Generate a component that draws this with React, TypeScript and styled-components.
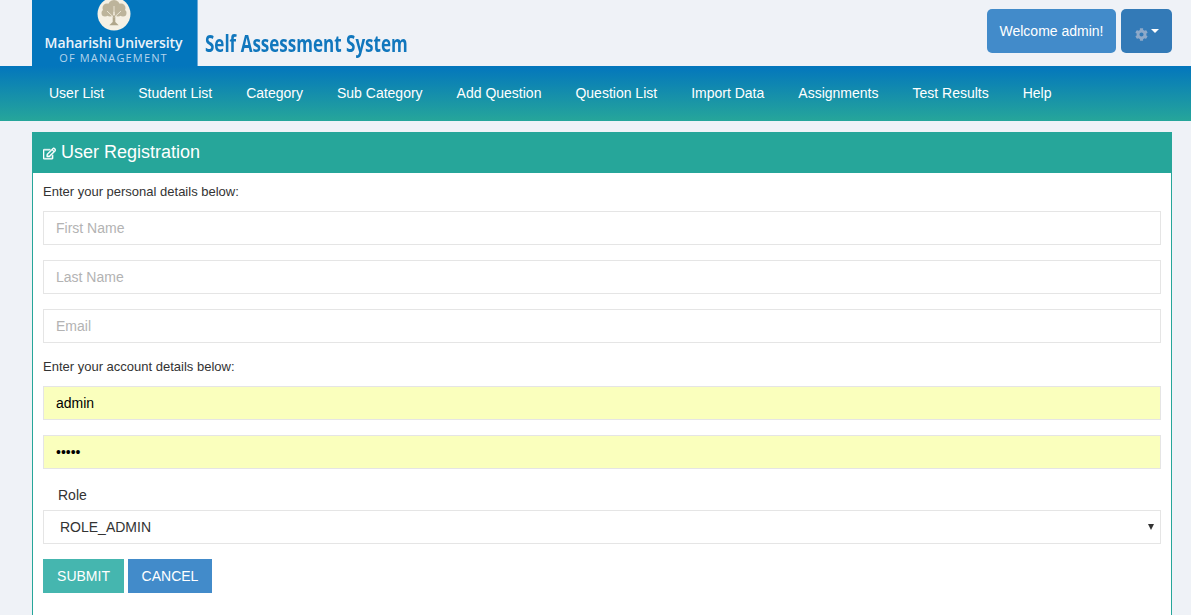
import React from 'react';
import styled, { createGlobalStyle } from 'styled-components';
import { FaCog, FaRegEdit } from 'react-icons/fa';

const NAV_ITEMS = [
  'User List',
  'Student List',
  'Category',
  'Sub Category',
  'Add Question',
  'Question List',
  'Import Data',
  'Assignments',
  'Test Results',
  'Help',
];

const GlobalStyle = createGlobalStyle`
  html, body {
    margin: 0;
    height: 100%;
    overflow: hidden;
    background: #eff2f7;
    font-family: "Liberation Sans", Arial, sans-serif;
    font-size: 14px;
    color: #333;
  }
`;

const Header = styled.header`
  height: 66px;
  padding: 0 19px 0 32px;
  display: flex;
  align-items: flex-start;
  justify-content: space-between;
`;

const Brand = styled.div`
  display: flex;
  align-items: flex-start;
`;

const LogoBlock = styled.div`
  width: 163px;
  height: 66px;
  padding-right: 2px;
  background: #0376bd;
  border-right: 1px solid #6aa9d8;
  color: #fff;
  overflow: hidden;
  display: flex;
  flex-direction: column;
  align-items: center;
  font-family: "Open Sans", sans-serif;
`;

const LogoSeal = styled.svg`
  width: 34px;
  height: 31px;
  flex: none;
  margin-bottom: 3px;
  filter: blur(0.4px);
`;

const LogoTitle = styled.div`
  font-size: 14px;
  font-weight: 600;
  line-height: 17px;
  letter-spacing: -0.1px;
  white-space: nowrap;
  color: #eaf3fa;
`;

const LogoSub = styled.div`
  font-size: 11px;
  line-height: 14px;
  letter-spacing: 1.15px;
  white-space: nowrap;
  color: #b4d4ec;
`;

const SystemName = styled.div`
  margin: 29px 0 0 7px;
  font-family: "Open Sans", sans-serif;
  font-weight: 700;
  font-size: 23px;
  line-height: 28px;
  color: #1177bd;
  white-space: nowrap;
  transform: scaleX(0.74);
  transform-origin: left center;
`;

const UserTools = styled.div`
  display: flex;
  gap: 5px;
  margin-top: 9px;
`;

const WelcomeBadge = styled.div`
  height: 44px;
  padding: 0 12.5px;
  display: flex;
  align-items: center;
  background: #428bca;
  border-radius: 5px;
  color: #fff;
  font-size: 14px;
`;

const SettingsButton = styled.button`
  width: 51px;
  height: 44px;
  padding: 0;
  border: 0;
  border-radius: 5px;
  background: #337ab7;
  display: flex;
  align-items: center;
  justify-content: center;
  gap: 3px;
  svg {
    color: #8ea9c9;
    width: 13px;
    height: 13px;
    margin-top: 7px;
  }
`;

const Caret = styled.span`
  width: 0;
  height: 0;
  margin-top: -1px;
  border-left: 4px solid transparent;
  border-right: 4px solid transparent;
  border-top: 4px solid #fff;
`;

const NavBar = styled.nav`
  height: 55px;
  padding-left: 32px;
  display: flex;
  background: linear-gradient(to bottom, #0376bd, #26a69a);
`;

const NavLink = styled.a`
  padding: 0 17px;
  line-height: 54px;
  color: #fff;
  font-size: 14px;
  white-space: nowrap;
`;

const Panel = styled.section`
  margin: 11px 19px 0 32px;
  background: #fff;
  border: 1px solid #26a69a;
  border-top: 0;
  border-bottom: 0;
`;

const PanelHeading = styled.h2`
  margin: 0 -1px;
  height: 41px;
  padding: 0 11px;
  display: flex;
  align-items: center;
  gap: 5px;
  background: #26a69a;
  color: #fff;
  font-size: 18px;
  font-weight: 400;
  svg {
    width: 13px;
    height: 13px;
    margin-top: 2px;
    stroke: currentColor;
    stroke-width: 20;
  }
`;

const PanelBody = styled.div`
  padding: 10px 10px 40px;
`;

const Hint = styled.p`
  margin: 0 0 11px;
  font-size: 13px;
  line-height: 17px;
  color: #333;
`;

const Field = styled.input<{ $filled?: boolean }>`
  display: block;
  box-sizing: border-box;
  width: 100%;
  height: 34px;
  margin-bottom: 15px;
  padding: 0 12px;
  border: 1px solid #e5e5e5;
  background: ${(p) => (p.$filled ? '#faffbd' : '#fff')};
  color: #000;
  font-family: inherit;
  font-size: 14px;
  outline: none;
  &::placeholder {
    color: #b3b3b3;
    opacity: 1;
  }
`;

const RoleLabel = styled.label`
  display: block;
  margin: 0 0 5px 15px;
  padding-top: 1px;
  font-size: 14px;
  line-height: 20px;
  color: #333;
`;

const SelectWrap = styled.div`
  position: relative;
  margin-bottom: 15px;
`;

const RoleSelect = styled.select`
  display: block;
  box-sizing: border-box;
  width: 100%;
  height: 34px;
  padding: 0 12px 0 16px;
  border: 1px solid #e5e5e5;
  border-radius: 0;
  appearance: none;
  background: #fff;
  color: #333;
  font-family: inherit;
  font-size: 14px;
`;

const SelectArrow = styled.span`
  position: absolute;
  top: 14px;
  right: 7px;
  width: 0;
  height: 0;
  border-left: 3px solid transparent;
  border-right: 3px solid transparent;
  border-top: 6px solid #333;
  pointer-events: none;
`;

const Actions = styled.div`
  display: flex;
  gap: 4px;
`;

const ActionButton = styled.button<{ $tone: string; $wide: number }>`
  width: ${(p) => p.$wide}px;
  height: 34px;
  padding: 0;
  border: 0;
  background: ${(p) => p.$tone};
  color: #fff;
  font-family: inherit;
  font-size: 14px;
  text-transform: uppercase;
`;

const Seal = () => (
  <LogoSeal viewBox="0 0 34 31" aria-hidden="true">
    <circle cx="17" cy="14" r="16.5" fill="#f5f0e4" />
    <g fill="#bdb49b">
      <circle cx="17" cy="6" r="6" />
      <circle cx="10" cy="8" r="4.5" />
      <circle cx="24" cy="8" r="4.5" />
      <circle cx="8" cy="13" r="3.5" />
      <circle cx="26" cy="13" r="3.5" />
      <circle cx="13" cy="13" r="3.5" />
      <circle cx="21" cy="13" r="3.5" />
    </g>
    <path d="M15.7 15h2.6v7l3.4 3.2H12.3l3.4-3.2z" fill="#b0a68b" />
    <path
      d="M16.3 17 10 11M17.7 17 24 11M17 16V6"
      stroke="#efe9d9"
      strokeWidth="0.9"
      fill="none"
    />
  </LogoSeal>
);

export default function App() {
  return (
    <>
      <GlobalStyle />
      <Header>
        <Brand>
          <LogoBlock>
            <Seal />
            <LogoTitle>Maharishi University</LogoTitle>
            <LogoSub>OF MANAGEMENT</LogoSub>
          </LogoBlock>
          <SystemName>Self Assessment System</SystemName>
        </Brand>
        <UserTools>
          <WelcomeBadge>Welcome admin!</WelcomeBadge>
          <SettingsButton aria-label="Settings">
            <FaCog />
            <Caret />
          </SettingsButton>
        </UserTools>
      </Header>
      <NavBar>
        {NAV_ITEMS.map((item) => (
          <NavLink key={item}>{item}</NavLink>
        ))}
      </NavBar>
      <Panel>
        <PanelHeading>
          <FaRegEdit />
          User Registration
        </PanelHeading>
        <PanelBody>
          <Hint>Enter your personal details below:</Hint>
          <Field placeholder="First Name" />
          <Field placeholder="Last Name" />
          <Field placeholder="Email" />
          <Hint>Enter your account details below:</Hint>
          <Field $filled defaultValue="admin" />
          <Field $filled type="password" defaultValue="admin" />
          <RoleLabel>Role</RoleLabel>
          <SelectWrap>
            <RoleSelect defaultValue="ROLE_ADMIN">
              <option>ROLE_ADMIN</option>
            </RoleSelect>
            <SelectArrow />
          </SelectWrap>
          <Actions>
            <ActionButton $tone="#45b6af" $wide={81}>Submit</ActionButton>
            <ActionButton $tone="#428bca" $wide={84}>Cancel</ActionButton>
          </Actions>
        </PanelBody>
      </Panel>
    </>
  );
}
